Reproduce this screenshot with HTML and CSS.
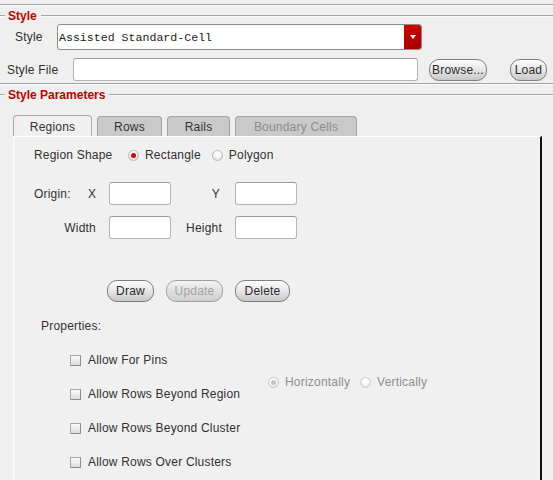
FILE: index.html
```html
<!DOCTYPE html>
<html>
<head>
<meta charset="utf-8">
<link rel="stylesheet" href="styles.css">
</head>
<body>
<div class="rule rule-top"></div>
<div class="legend legend-style"><span class="legend-line-l"></span><span class="legend-text">Style</span><span class="legend-line-r"></span></div>
<div class="row row-style">
  <span class="lbl lbl-style">Style</span>
  <div class="combo"><span class="combo-text">Assisted Standard-Cell</span><span class="combo-btn"><span class="tri"></span></span></div>
</div>
<div class="row row-file">
  <span class="lbl lbl-file">Style File</span>
  <div class="input input-file"></div>
  <span class="btn btn-browse">Browse...</span>
  <span class="btn btn-load">Load</span>
</div>
<div class="rule rule-mid"></div>
<div class="legend legend-params"><span class="legend-line-l"></span><span class="legend-text">Style Parameters</span><span class="legend-line-r"></span></div>
<div class="tabs">
  <span class="tab tab-active tab-regions">Regions</span>
  <span class="tab tab-rows">Rows</span>
  <span class="tab tab-rails">Rails</span>
  <span class="tab tab-disabled tab-boundary">Boundary Cells</span>
</div>
<div class="panel">
  <div class="prow shape-row">
    <span class="lbl shape-lbl">Region Shape</span>
    <span class="radio radio-on"></span><span class="lbl rtext">Rectangle</span>
    <span class="radio radio-2"></span><span class="lbl rtext">Polygon</span>
  </div>
  <div class="prow origin-row">
    <span class="lbl c-origin">Origin:</span>
    <span class="lbl c-x">X</span>
    <div class="input small"></div>
    <span class="lbl c-y">Y</span>
    <div class="input small"></div>
  </div>
  <div class="prow size-row">
    <span class="lbl c-width">Width</span>
    <div class="input small"></div>
    <span class="lbl c-height">Height</span>
    <div class="input small"></div>
  </div>
  <div class="prow btn-row">
    <span class="btn btn-draw">Draw</span>
    <span class="btn btn-update disabled">Update</span>
    <span class="btn btn-delete">Delete</span>
  </div>
  <div class="lbl props-lbl">Properties:</div>
  <div class="props">
    <div class="checks">
      <div class="check-row"><span class="cbox"></span><span class="lbl">Allow For Pins</span></div>
      <div class="check-row"><span class="cbox"></span><span class="lbl">Allow Rows Beyond Region</span></div>
      <div class="check-row"><span class="cbox"></span><span class="lbl">Allow Rows Beyond Cluster</span></div>
      <div class="check-row"><span class="cbox"></span><span class="lbl">Allow Rows Over Clusters</span></div>
    </div>
    <div class="orient">
      <span class="radio radio-dis-on"></span><span class="lbl dis rtext">Horizontally</span>
      <span class="radio radio-dis radio-v"></span><span class="lbl dis rtext">Vertically</span>
    </div>
  </div>
</div>
</body>
</html>
```
FILE: styles.css
```css
html, body {
  margin: 0;
  padding: 0;
  background: #efefef;
  width: 553px;
  height: 480px;
  overflow: hidden;
  font-family: "Liberation Sans", Arial, sans-serif;
  font-size: 12px;
  color: #303030;
}

.rule {
  height: 1px;
  background: #a4a4a4;
  border-bottom: 1px solid #fafafa;
}
.rule-top { margin-top: 4px; }
.rule-mid { margin-top: 2px; }

.legend {
  display: flex;
  align-items: center;
  height: 14px;
}
.legend-style { margin-top: 3px; }
.legend-params { margin-top: 3px; }
.legend-line-l, .legend-line-r {
  height: 1px;
  background: #a4a4a4;
  border-bottom: 1px solid #fafafa;
}
.legend-line-l { width: 5px; }
.legend-line-r { flex: 1; }
.legend-text {
  color: #c40000;
  font-weight: bold;
  font-size: 12px;
  padding: 0 4px 0 3px;
  line-height: 14px;
}

.row {
  display: flex;
  align-items: center;
}
.lbl { white-space: nowrap; line-height: 14px; letter-spacing: 0.2px; }

.row-style { margin-top: 1px; height: 26px; padding-left: 15px; }
.lbl-style { width: 42px; }
.combo {
  width: 363px;
  height: 24px;
  background: #fff;
  border: 1px solid #8c8c8c;
  border-radius: 3px;
  display: flex;
  align-items: center;
  overflow: hidden;
}
.combo-text {
  flex: 1;
  font-family: "Liberation Mono", "Courier New", monospace;
  font-size: 11.6px;
  color: #1a1a1a;
  padding-left: 1px;
}
.combo-btn {
  width: 17px;
  height: 24px;
  background: linear-gradient(#d00000, #a80000);
  display: flex;
  align-items: center;
  justify-content: center;
}
.tri {
  width: 0;
  height: 0;
  border-left: 3px solid transparent;
  border-right: 3px solid transparent;
  border-top: 4px solid #fff;
}

.row-file { margin-top: 8px; height: 23px; padding-left: 7px; }
.lbl-file { width: 66px; }
.input {
  background: #fff;
  border: 1px solid #b4b4b4;
  border-top-color: #9a9a9a;
  border-radius: 3px;
  box-sizing: border-box;
  height: 23px;
}
.input-file { width: 345px; }

.btn {
  box-sizing: border-box;
  height: 22px;
  border: 1px solid #7e7e7e;
  border-radius: 10px;
  background: linear-gradient(#fdfdfd, #e6e6e6 50%, #c8c8c8);
  display: inline-flex;
  align-items: center;
  justify-content: center;
  color: #2a2a2a;
  font-size: 12px;
  letter-spacing: 0.2px;
}
.btn.disabled {
  color: #a4a4a4;
  border-color: #a0a0a0;
  background: linear-gradient(#f4f4f4, #e0e0e0 50%, #cfcfcf);
}
.btn-browse { width: 58px; margin-left: 11px; }
.btn-load { width: 37px; margin-left: 23px; }

.tabs {
  display: flex;
  align-items: flex-end;
  margin-top: 13px;
  padding-left: 13px;
  height: 21px;
}
.tab {
  box-sizing: border-box;
  height: 20px;
  border: 1px solid #a2a2a2;
  border-bottom: none;
  border-radius: 4px 4px 0 0;
  background: #c9c9c9;
  display: flex;
  align-items: center;
  justify-content: center;
  color: #333;
  margin-right: 5px;
  letter-spacing: 0.2px;
  padding-top: 1px;
}
.tab-active {
  height: 21px;
  background: #f0f0f0;
  border-color: #a8a8a8;
}
.tab-disabled { color: #8c8c8c; }
.tab-regions { width: 79px; }
.tab-rows { width: 65px; }
.tab-rails { width: 63px; }
.tab-boundary { width: 122px; }

.panel {
  margin-left: 13px;
  width: 529px;
  box-sizing: border-box;
  height: 360px;
  background: #f0f0f0;
  border-left: 1px solid #ffffff;
  border-top: 1px solid #ffffff;
  border-right: 2px solid #111;
  padding-top: 8px;
  padding-left: 20px;
}
.prow { display: flex; align-items: center; }

.shape-row { height: 20px; }
.shape-lbl { width: 94px; }
.radio {
  box-sizing: border-box;
  width: 11px;
  height: 11px;
  border-radius: 50%;
  border: 1px solid #b8b8b8;
  background: radial-gradient(circle at 50% 35%, #ffffff 30%, #d4d4d4 100%);
  position: relative;
  flex: none;
}
.radio-on::after, .radio-dis-on::after {
  content: "";
  position: absolute;
  left: 2px;
  top: 2px;
  width: 5px;
  height: 5px;
  border-radius: 50%;
  background: #d40000;
}
.radio-dis-on::after { background: #c4c4c4; }
.radio-dis, .radio-dis-on { border-color: #cacaca; }
.rtext { margin-left: 6px; }
.radio-2 { margin-left: 11px; }

.origin-row { margin-top: 17px; height: 23px; }
.c-origin { width: 54px; }
.c-x { width: 21px; }
.small { width: 62px; }
.c-y { width: 49px; text-align: right; padding-right: 15px; }

.size-row { margin-top: 11px; height: 23px; }
.c-width { width: 62px; text-align: right; padding-right: 13px; }
.c-height { width: 51px; text-align: right; padding-right: 13px; }

.btn-row { margin-top: 41px; height: 22px; padding-left: 73px; }
.btn-draw { width: 47px; }
.btn-update { width: 57px; margin-left: 12px; }
.btn-delete { width: 55px; margin-left: 12px; }

.props-lbl { margin-top: 16px; margin-left: 7px; height: 16px; line-height: 16px; }

.props {
  margin-top: 9px;
  margin-left: 36px;
  display: grid;
  grid-template-columns: 198px auto;
  align-items: start;
}
.check-row {
  height: 34px;
  display: flex;
  align-items: center;
}
.cbox {
  box-sizing: border-box;
  width: 11px;
  height: 11px;
  border: 1px solid #8e8e8e;
  border-top-color: #a8a8a8;
  border-left-color: #a8a8a8;
  background: linear-gradient(#fafafa, #dcdcdc);
  margin-right: 7px;
  flex: none;
}
.orient {
  margin-top: 31px;
  height: 16px;
  display: flex;
  align-items: center;
}
.dis { color: #8e8e8e; }
.radio-v { margin-left: 10px; }
```
